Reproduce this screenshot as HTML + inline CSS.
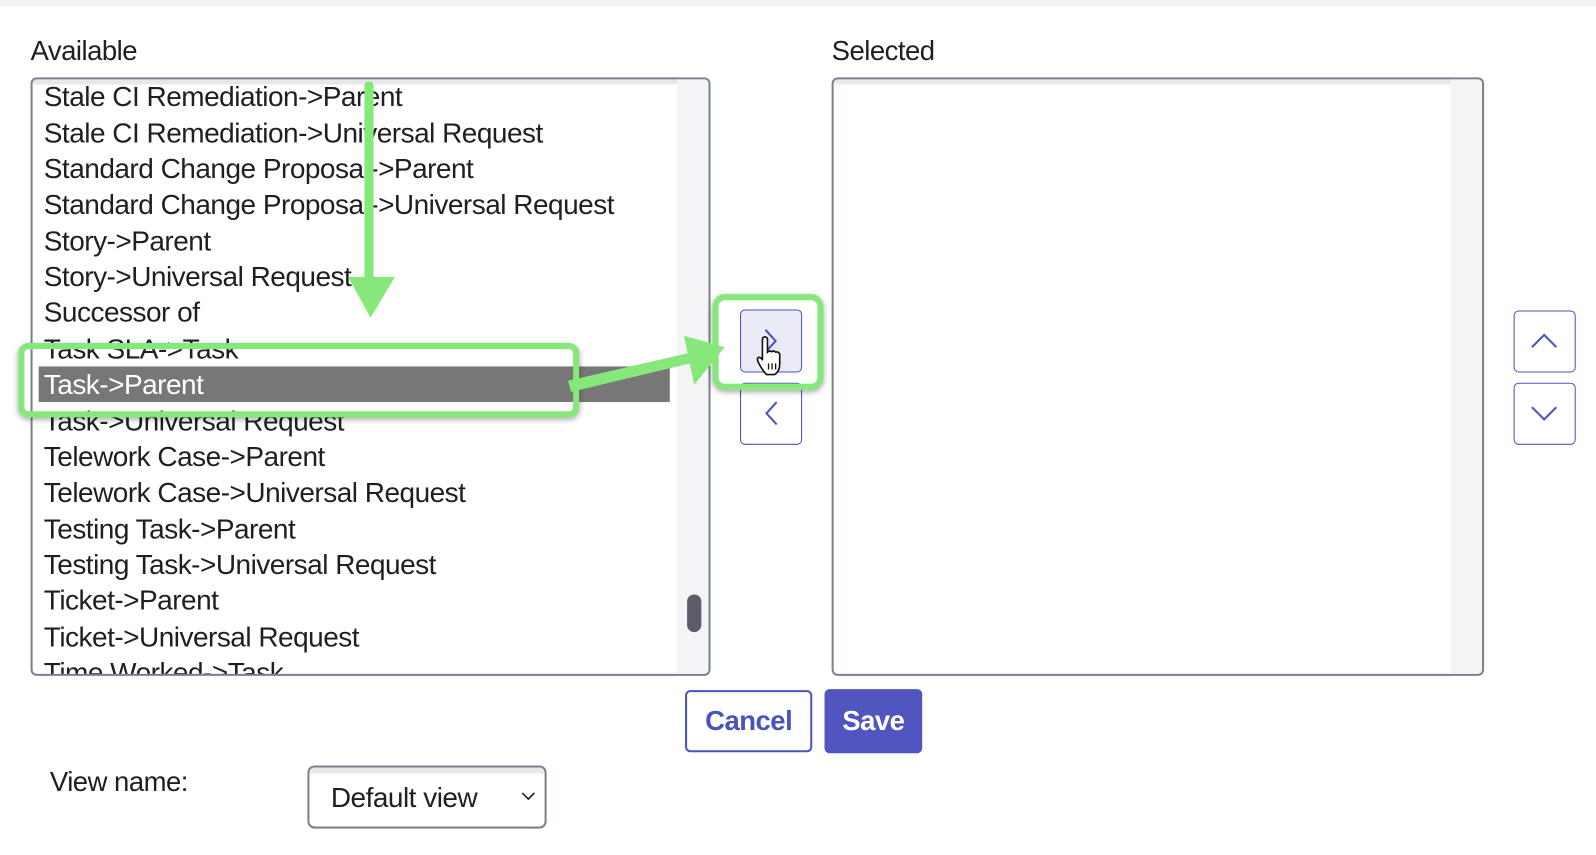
<!DOCTYPE html>
<html><head><meta charset="utf-8"><style>
body{margin:0;width:1596px;height:840px;background:#fff;position:relative;overflow:hidden;font-family:"Liberation Sans",sans-serif;color:#1d1f24}
#w{position:absolute;left:0;top:0;width:1568px;height:826px;transform:scale(1.0179);transform-origin:0 0}
.a{position:absolute}
.lbl{font-size:27px;letter-spacing:-0.5px}
.box{position:absolute;border:2px solid #7b818f;border-radius:6px;background:#fff;overflow:hidden;box-sizing:border-box}
.gut{position:absolute;top:0;right:0;width:31px;bottom:0;background:#f3f4f6}
.it{position:absolute;left:11px;font-size:27.5px;letter-spacing:-0.5px;white-space:nowrap;line-height:34px}
.btn{position:absolute;border:1.5px solid #4a52c0;border-radius:5px;box-sizing:border-box;background:#fff}
</style></head><body><div id="w">
<div class="a" style="left:0;top:0;width:1596px;height:6px;background:#f3f3f3"></div>
<div class="a lbl" style="left:30px;top:35px">Available</div>
<div class="a lbl" style="left:817px;top:35px">Selected</div>

<div class="box" style="left:30px;top:76px;width:668px;height:588px">
 <div class="a" style="left:0;top:0;right:0;height:5px;background:#e6e8ea"></div>
 <div class="gut"></div>
 <div class="a" style="left:643px;top:506px;width:14px;height:37px;border-radius:7px;background:#5b5b6b"></div>
 <div class="a" style="left:6px;top:282px;width:620px;height:35px;background:#777"></div>
 <div class="it" style="top:0">Stale CI Remediation-&gt;Parent</div>
 <div class="it" style="top:36px">Stale CI Remediation-&gt;Universal Request</div>
 <div class="it" style="top:71px">Standard Change Proposal-&gt;Parent</div>
 <div class="it" style="top:106px">Standard Change Proposal-&gt;Universal Request</div>
 <div class="it" style="top:142px">Story-&gt;Parent</div>
 <div class="it" style="top:177px">Story-&gt;Universal Request</div>
 <div class="it" style="top:212px">Successor of</div>
 <div class="it" style="top:248px">Task SLA-&gt;Task</div>
 <div class="it" style="top:283px;color:#fff">Task-&gt;Parent</div>
 <div class="it" style="top:319px">Task-&gt;Universal Request</div>
 <div class="it" style="top:354px">Telework Case-&gt;Parent</div>
 <div class="it" style="top:389px">Telework Case-&gt;Universal Request</div>
 <div class="it" style="top:425px">Testing Task-&gt;Parent</div>
 <div class="it" style="top:460px">Testing Task-&gt;Universal Request</div>
 <div class="it" style="top:495px">Ticket-&gt;Parent</div>
 <div class="it" style="top:531px">Ticket-&gt;Universal Request</div>
 <div class="it" style="top:566px">Time Worked-&gt;Task</div>
</div>

<div class="box" style="left:817px;top:76px;width:641px;height:588px">
 <div class="a" style="left:0;top:0;right:0;height:5px;background:#e6e8ea"></div>
 <div class="gut"></div>
</div>

<div class="btn" style="left:727px;top:304px;width:61px;height:62px;background:#ebebf7"></div>
<svg class="a" style="left:727px;top:304px" width="61" height="62"><path d="M25 20 L35 31 L25 42" fill="none" stroke="#4a52c0" stroke-width="2"/></svg>
<div class="btn" style="left:727px;top:376px;width:61px;height:61px"></div>
<svg class="a" style="left:727px;top:376px" width="61" height="61"><path d="M36 19 L26 30 L36 41" fill="none" stroke="#4a52c0" stroke-width="2"/></svg>
<div class="btn" style="left:1487px;top:305px;width:61px;height:61px"></div>
<svg class="a" style="left:1487px;top:305px" width="61" height="61"><path d="M18 36 L30 24 L42 36" fill="none" stroke="#4a52c0" stroke-width="2"/></svg>
<div class="btn" style="left:1487px;top:376px;width:61px;height:61px"></div>
<svg class="a" style="left:1487px;top:376px" width="61" height="61"><path d="M18 24 L30 36 L42 24" fill="none" stroke="#4a52c0" stroke-width="2"/></svg>

<svg class="a" style="left:740px;top:330px" width="32" height="42"><path d="M9 4 Q9 1 11.5 1 Q14 1 14 4 L14 16 Q16 14 18 15.5 Q20 14 22 16 Q24 15 26 17.5 L26 28 Q26 35 21 38 L13 38 Q9 34 5 26 Q3 22 5.5 21 Q8 21 9 24 Z" fill="#fff" stroke="#111" stroke-width="1.6"/><path d="M15 27v6M18.5 27v6M22 27v6" stroke="#111" stroke-width="1.3"/></svg>

<div class="a" style="left:18px;top:337px;width:551px;height:73px;border:6px solid #86e77a;border-radius:10px;box-sizing:border-box;box-shadow:0 2px 6px rgba(0,0,0,.35)"></div>
<div class="a" style="left:700px;top:289px;width:109px;height:94px;border:6px solid #86e77a;border-radius:12px;box-sizing:border-box;box-shadow:0 2px 6px rgba(0,0,0,.35)"></div>
<svg class="a" style="left:0;top:0" width="1596" height="840">
 <g fill="#86e77a">
  <rect x="358" y="80" width="9" height="200" rx="4"/>
  <path d="M342 272 L388 272 L364 312 Z"/>
  <path d="M558 374 L680 346 L682 356 L561 385 Z"/>
  <path d="M672 330 L712 341 L682 378 Z"/>
 </g>
</svg>

<div class="btn" style="left:673px;top:678px;width:125px;height:61px;border-width:2px"></div>
<div class="a" style="left:673px;top:678px;width:125px;height:61px;line-height:61px;text-align:center;font-size:27px;font-weight:bold;color:#4a52c0;letter-spacing:-0.5px">Cancel</div>
<div class="a" style="left:810px;top:677px;width:96px;height:63px;line-height:63px;text-align:center;font-size:27px;font-weight:bold;color:#fff;background:#5055c0;border-radius:5px;letter-spacing:-0.5px">Save</div>

<div class="a lbl" style="left:49px;top:753px">View name:</div>
<div class="box" style="left:302px;top:752px;width:235px;height:62px;border-radius:7px">
 <div class="a" style="left:0;top:0;right:0;height:6px;background:#e6e8ea"></div>
 <div class="a" style="left:21px;top:14px;font-size:27.5px;letter-spacing:-0.5px">Default view</div>
 <svg class="a" style="left:207px;top:22px" width="16" height="12"><path d="M2 3 L8 9 L14 3" fill="none" stroke="#222" stroke-width="1.6"/></svg>
</div>
</div></body></html>
